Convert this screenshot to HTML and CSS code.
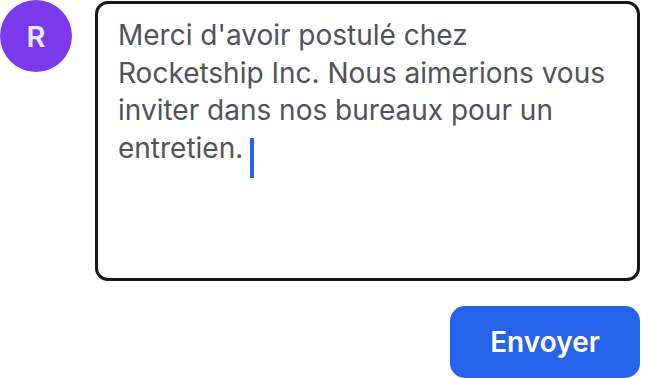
FILE: index.html
```html
<!DOCTYPE html>
<html lang="fr">
<head>
<meta charset="utf-8">
<link rel="stylesheet" href="styles.css">
</head>
<body>
<div class="row">
  <div class="avatar">R</div>
  <div class="compose">
    <div class="box">
      <p class="msg">Merci d'avoir postulé chez Rocketship Inc. Nous aimerions vous inviter dans nos bureaux pour un entretien.<span class="caret"></span></p>
    </div>
    <div class="actions">
      <button class="send">Envoyer</button>
    </div>
  </div>
</div>
</body>
</html>
```
FILE: styles.css
```css
html, body {
  margin: 0;
  padding: 0;
  background: #ffffff;
  font-family: Inter, "Noto Sans", sans-serif;
}
.row {
  display: flex;
  align-items: flex-start;
  gap: 23px;
  padding-top: 1px;
  width: 640px;
}
.avatar {
  width: 72px;
  height: 72px;
  margin-top: -1px;
  flex: none;
  border-radius: 50%;
  background: #7c3aed;
  color: #ede9fe;
  font-size: 29px;
  font-weight: 600;
  display: flex;
  align-items: center;
  justify-content: center;
}
.compose {
  flex: 1;
  display: flex;
  flex-direction: column;
}
.box {
  box-sizing: border-box;
  height: 280px;
  border: 3.5px solid #18181b;
  border-radius: 13px;
  padding: 13px 16px 0 20px;
}
.msg {
  margin: 0;
  font-size: 28px;
  line-height: 37.5px;
  color: #52525b;
}
.caret {
  display: inline-block;
  width: 4px;
  height: 40px;
  background: #2563eb;
  vertical-align: -20px;
  margin-left: 7px;
}
.actions {
  display: flex;
  justify-content: flex-end;
  margin-top: 25px;
}
.send {
  width: 190px;
  height: 72px;
  border: none;
  border-radius: 15px;
  background: #2563eb;
  color: #ffffff;
  font-family: Inter, "Noto Sans", sans-serif;
  font-size: 28px;
  font-weight: 600;
}
```
